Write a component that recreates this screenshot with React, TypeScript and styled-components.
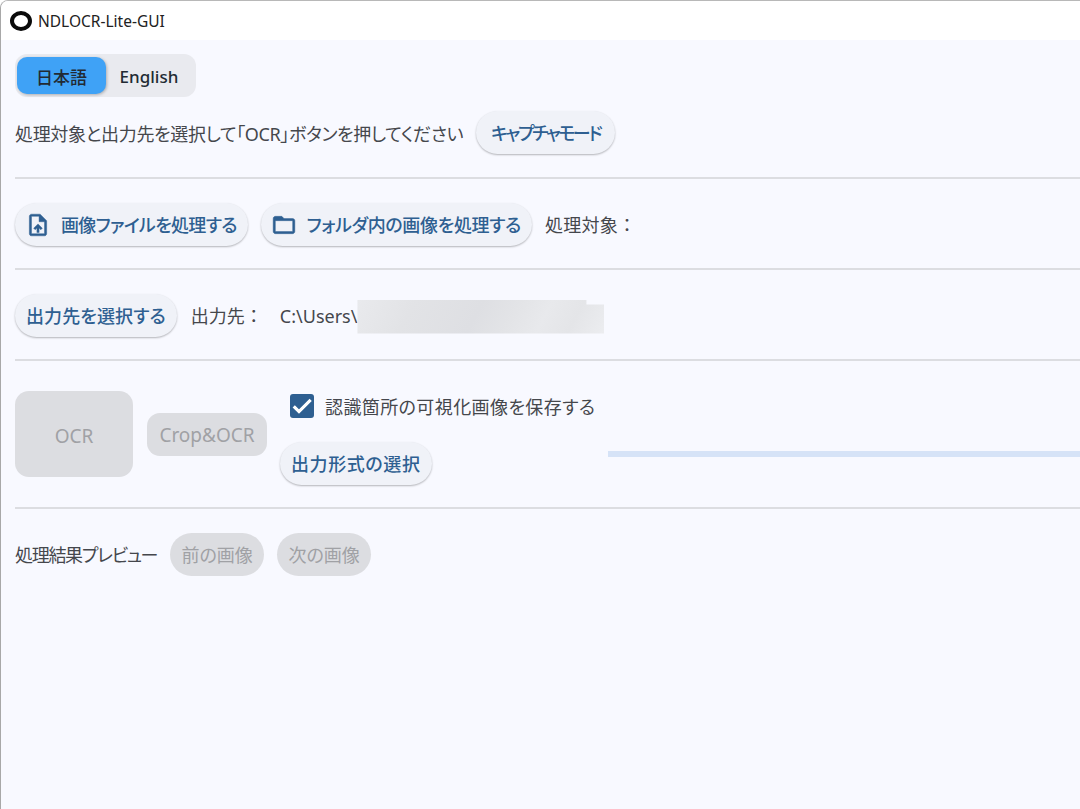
import styled, { createGlobalStyle } from "styled-components"

const GlobalStyle = createGlobalStyle`
  html, body {
    margin: 0;
    padding: 0;
    background: #fff;
    overflow: hidden;
  }
  body {
    font-family: "Noto Sans", "Noto Sans CJK JP", sans-serif;
    font-feature-settings: "palt";
  }
`

const Window = styled.div`
  width: 1080px;
  height: 809px;
  box-sizing: border-box;
  border-left: 1px solid #a8a8a8;
  border-top: 1px solid #b8b8b8;
  border-top-left-radius: 8px;
  background: #f8f9ff;
  overflow: hidden;
  display: flex;
  flex-direction: column;
`

const TitleBar = styled.div`
  height: 39px;
  flex: none;
  background: #fff;
  display: flex;
  align-items: center;
  gap: 6px;
  padding-left: 9px;
  font-size: 15.5px;
  color: #222;
`

const Logo = styled.span`
  width: 22px;
  height: 20px;
  flex: none;
  box-sizing: border-box;
  border: 4px solid #0a0a0a;
  border-radius: 50%;
`

const Content = styled.div`
  flex: 1;
  padding: 14px 0 0 14px;
  display: flex;
  flex-direction: column;
`

const Toggle = styled.div`
  align-self: flex-start;
  display: flex;
  width: 181px;
  height: 43px;
  box-sizing: border-box;
  padding: 3px 2px;
  border-radius: 12px;
  background: #e9eaef;
`

const ToggleItem = styled.div<{ $active?: boolean }>`
  width: ${(p) => (p.$active ? "89px" : "86px")};
  padding-top: 2px;
  box-sizing: border-box;
  display: flex;
  align-items: center;
  justify-content: center;
  border-radius: 10px;
  font-size: 17px;
  font-weight: 500;
  color: #222a33;
  background: ${(p) => (p.$active ? "#3fa2f6" : "transparent")};
  box-shadow: ${(p) => (p.$active ? "1px 1px 3px rgba(0,0,0,0.25)" : "none")};
`

const Row = styled.div<{ $gap?: number }>`
  display: flex;
  align-items: center;
  gap: ${(p) => p.$gap ?? 14}px;
`

const Label = styled.span<{ $tracking?: number; $plain?: boolean; $lift?: boolean }>`
  font-size: 18px;
  color: #45474c;
  white-space: nowrap;
  letter-spacing: ${(p) => p.$tracking ?? 0}px;
  font-feature-settings: ${(p) => (p.$plain ? "normal" : '"palt"')};
  margin-bottom: ${(p) => (p.$lift ? "2px" : "0")};
`

const Pill = styled.div<{ $tracking?: number; $pad?: number }>`
  height: 43px;
  box-sizing: border-box;
  padding: 0 ${(p) => p.$pad ?? 11}px 2px;
  display: inline-flex;
  align-items: center;
  gap: 10px;
  border-radius: 22px;
  background: #f0f2f8;
  box-shadow: 0 1px 2px rgba(0, 0, 0, 0.28);
  color: #2e5f91;
  font-size: 18px;
  font-weight: 500;
  white-space: nowrap;
  letter-spacing: ${(p) => p.$tracking ?? 0}px;
  svg {
    width: 26px;
    height: 26px;
    margin: 2px 0 0 -1px;
    fill: currentColor;
    stroke: currentColor;
    stroke-width: 0.4;
    flex: none;
  }
`

const Divider = styled.div`
  height: 2px;
  flex: none;
  background: #dcdde1;
`

const Disabled = styled.div`
  display: flex;
  align-items: center;
  justify-content: center;
  box-sizing: border-box;
  background: #dcdde1;
  color: #a0a1a5;
  font-size: 18px;
  white-space: nowrap;
`

const OcrButton = styled(Disabled)`
  width: 118px;
  height: 86px;
  padding-top: 3px;
  border-radius: 14px;
  font-size: 19px;
`

const CropButton = styled(Disabled)`
  width: 120px;
  height: 43px;
  padding-top: 2px;
  border-radius: 13px;
  font-size: 19px;
`

const NavButton = styled(Disabled)`
  width: 94px;
  height: 43px;
  padding-bottom: 2px;
  border-radius: 22px;
`

const Redacted = styled.span`
  width: 247px;
  height: 34px;
  margin-top: 2px;
  background: linear-gradient(
    118deg,
    #e9eaed 0%,
    #e2e3e6 22%,
    #dedfe3 48%,
    #e3e4e7 62%,
    #e8e9ec 74%,
    #e4e5e8 86%,
    #ecedf0 100%
  );
  clip-path: polygon(0 0, 229px 0, 229px 5px, 247px 5px, 247px 100%, 0 100%);
`

const PathValue = styled(Row)`
  gap: 0;
  margin-left: 3px;
`

const ToolColumn = styled.div`
  width: 328px;
  margin: 3px 0 0 13px;
  display: flex;
  flex-direction: column;
  align-items: flex-start;
  gap: 24px;
`

const CheckRow = styled.div`
  height: 24px;
  display: flex;
  align-items: center;
  gap: 11px;
  margin-left: 10px;
`

const CheckBox = styled.span`
  width: 24px;
  height: 24px;
  border-radius: 3px;
  background: #2e5f91;
  display: flex;
  align-items: center;
  justify-content: center;
  svg {
    width: 24px;
    height: 24px;
    fill: #fff;
    stroke: #fff;
    stroke-width: 1.1;
  }
`

const Progress = styled.div`
  flex: 1;
  height: 6px;
  margin-top: 60px;
  background: #d6e3f7;
`

const Section = styled.div<{ $top?: number; $bottom?: number }>`
  padding: ${(p) => p.$top ?? 24}px 0 ${(p) => p.$bottom ?? 22}px;
`

const OutputSection = styled.div`
  padding: 30px 0 22px;
  display: flex;
  align-items: flex-start;
`

const OcrGroup = styled(Row)`
  height: 86px;
`

const App = () => {
  return (
    <Window>
      <GlobalStyle />
      <TitleBar>
        <Logo />
        NDLOCR-Lite-GUI
      </TitleBar>
      <Content>
        <Toggle>
          <ToggleItem $active>日本語</ToggleItem>
          <ToggleItem>English</ToggleItem>
        </Toggle>
        <Section $top={14} $bottom={23}>
          <Row $gap={13}>
            <Label $tracking={-0.35}>処理対象と出力先を選択して「OCR」ボタンを押してください</Label>
            <Pill $tracking={-2.4} $pad={15}>キャプチャモード</Pill>
          </Row>
        </Section>
        <Divider />
        <Section>
          <Row $gap={13}>
            <Pill $tracking={-0.7}>
              <svg viewBox="0 0 24 24">
                <path d="M14 2H6c-1.1 0-1.99.9-1.99 2L4 20c0 1.1.89 2 1.99 2H18c1.1 0 2-.9 2-2V8l-6-6zm4 18H6V4h7v5h5v11zM8 15.01l1.41 1.41L11 14.84V19h2v-4.16l1.59 1.59L16 15.01 12.01 11z" />
              </svg>
              画像ファイルを処理する
            </Pill>
            <Pill $tracking={-0.35}>
              <svg viewBox="0 0 24 24">
                <path d="M20 6h-8l-2-2H4c-1.1 0-1.99.9-1.99 2L2 18c0 1.1.9 2 2 2h16c1.1 0 2-.9 2-2V8c0-1.1-.9-2-2-2zm0 12H4V8h16v10z" />
              </svg>
              フォルダ内の画像を処理する
            </Pill>
            <Label $plain $lift $tracking={0.3}>処理対象：</Label>
          </Row>
        </Section>
        <Divider />
        <Section>
          <Row>
            <Pill $tracking={0.1}>出力先を選択する</Pill>
            <Label $plain $lift>出力先：</Label>
            <PathValue>
              <Label>C:\Users\</Label>
              <Redacted />
            </PathValue>
          </Row>
        </Section>
        <Divider />
        <OutputSection>
          <OcrGroup>
            <OcrButton>OCR</OcrButton>
            <CropButton>Crop&amp;OCR</CropButton>
          </OcrGroup>
          <ToolColumn>
            <CheckRow>
              <CheckBox>
                <svg viewBox="0 0 24 24">
                  <path d="M9 16.17L4.83 12l-1.42 1.41L9 19 21 7l-1.41-1.41z" />
                </svg>
              </CheckBox>
              <Label $tracking={0.4}>認識箇所の可視化画像を保存する</Label>
            </CheckRow>
            <Pill $tracking={0.6}>出力形式の選択</Pill>
          </ToolColumn>
          <Progress />
        </OutputSection>
        <Divider />
        <Section>
          <Row $gap={13}>
            <Label $tracking={-1.3} $lift>処理結果プレビュー</Label>
            <NavButton>前の画像</NavButton>
            <NavButton>次の画像</NavButton>
          </Row>
        </Section>
      </Content>
    </Window>
  )
}

export default App
